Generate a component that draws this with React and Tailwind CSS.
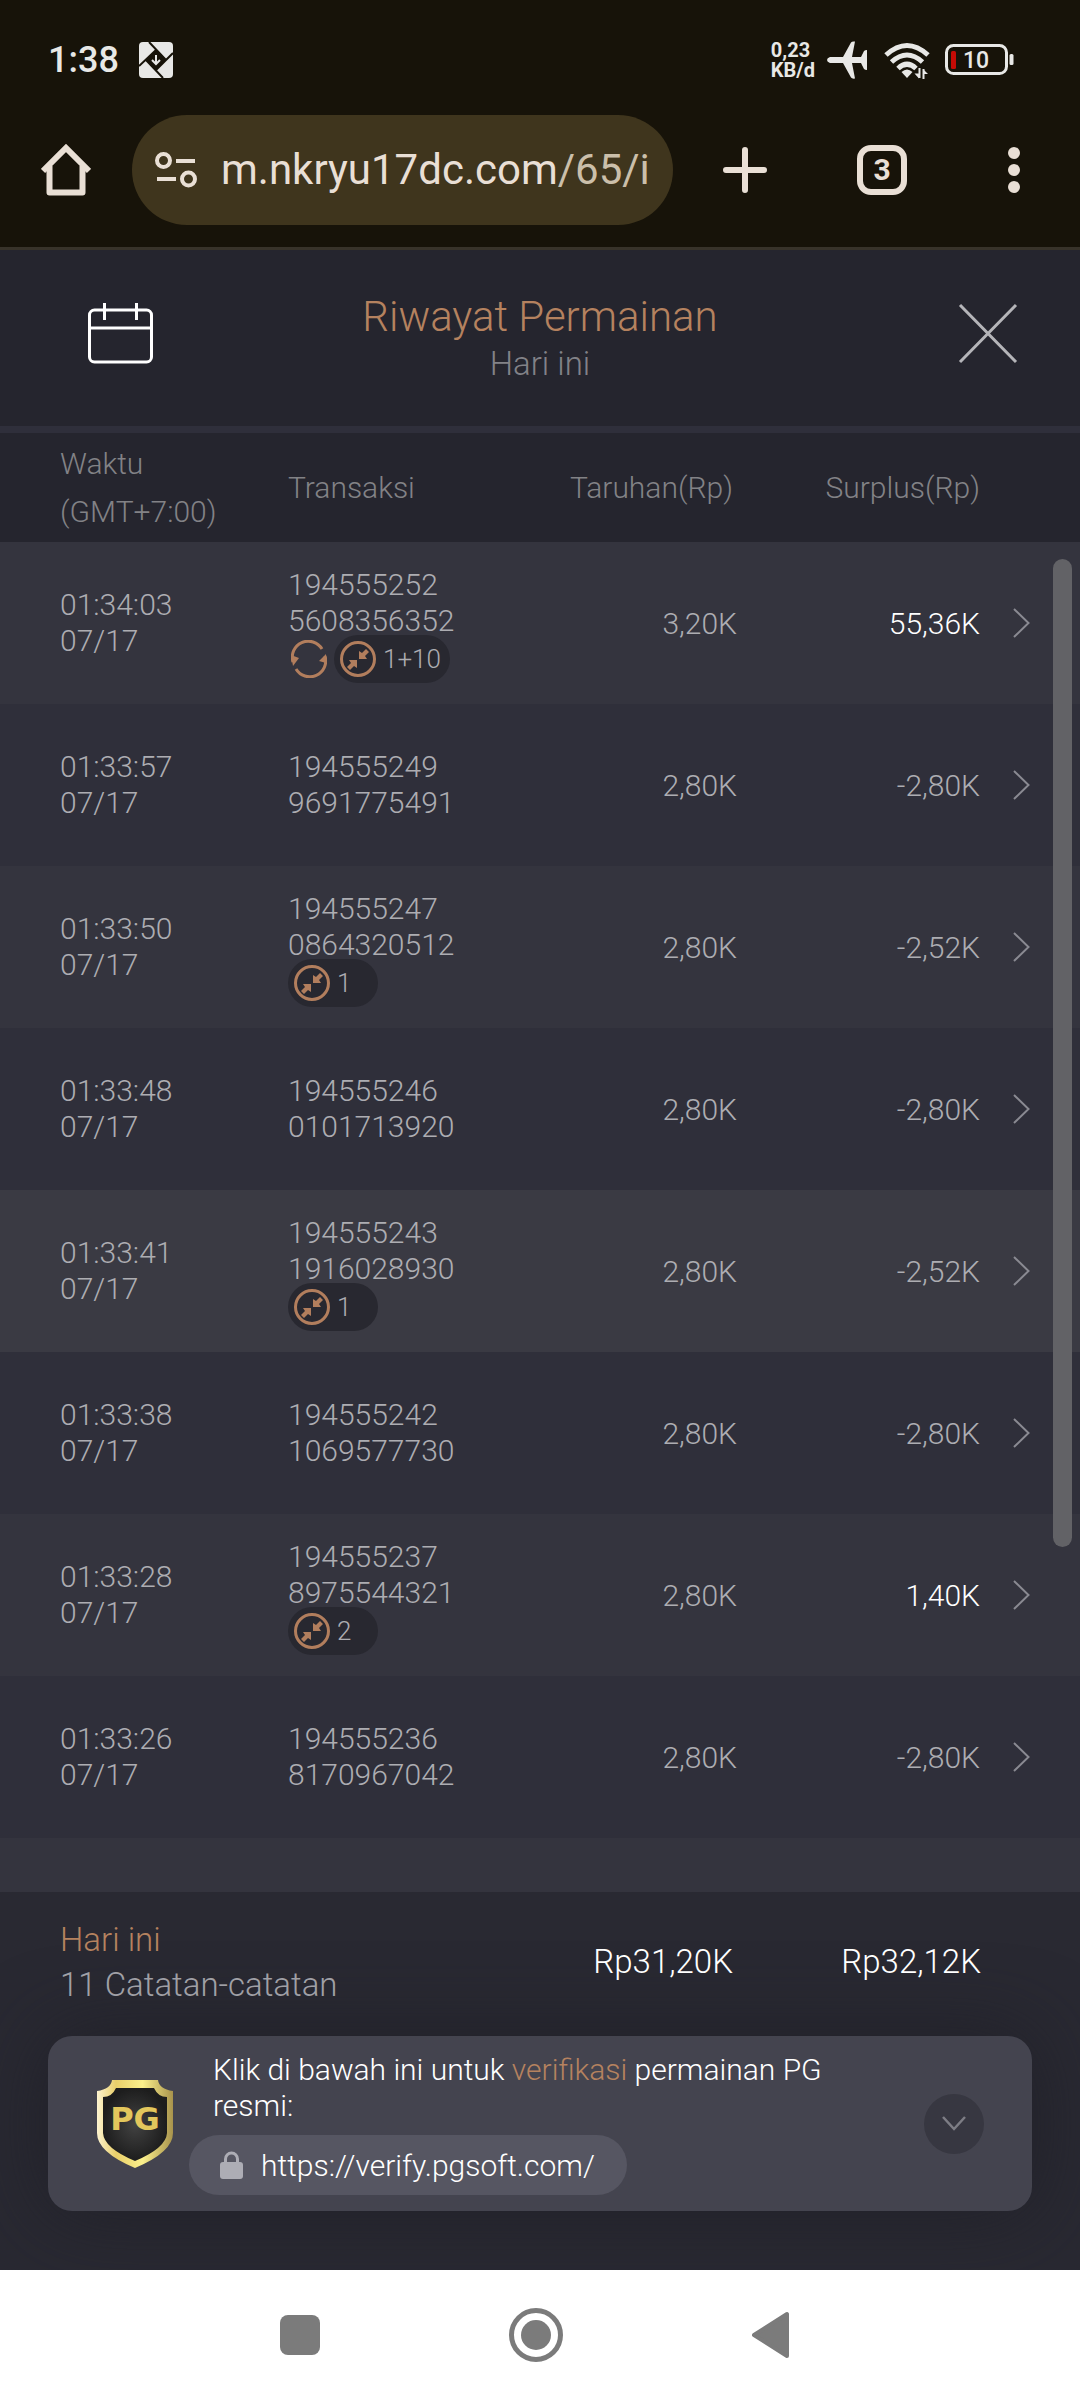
import { useState } from 'react';

const ROWS = [
  { time: '01:34:03', id: ['194555252', '5608356352'], bet: '3,20K', profit: '55,36K', win: true, free: true, badge: '1+10' },
  { time: '01:33:57', id: ['194555249', '9691775491'], bet: '2,80K', profit: '-2,80K' },
  { time: '01:33:50', id: ['194555247', '0864320512'], bet: '2,80K', profit: '-2,52K', badge: '1' },
  { time: '01:33:48', id: ['194555246', '0101713920'], bet: '2,80K', profit: '-2,80K' },
  { time: '01:33:41', id: ['194555243', '1916028930'], bet: '2,80K', profit: '-2,52K', badge: '1' },
  { time: '01:33:38', id: ['194555242', '1069577730'], bet: '2,80K', profit: '-2,80K' },
  { time: '01:33:28', id: ['194555237', '8975544321'], bet: '2,80K', profit: '1,40K', win: true, badge: '2' },
  { time: '01:33:26', id: ['194555236', '8170967042'], bet: '2,80K', profit: '-2,80K' },
];

function StatusBar() {
  return (
    <div className="flex h-[108px] items-center pt-3 pr-[66px] pl-12 text-[#e8e8e6]">
      <span className="text-4xl font-medium">1:38</span>
      <svg className="ml-5" width="34" height="36" viewBox="0 0 34 36">
        <rect width="34" height="36" rx="4" fill="currentColor" />
        <path d="M17 8 27 18 17 28 7 18Z" fill="#171309" />
        <path d="M10 0 27 18M34 11 17 28M24 36 7 18M0 24 17 8" stroke="#171309" strokeWidth="2" />
        <path d="M17 13v8M13 18l4 4 4-4" stroke="currentColor" strokeWidth="2" fill="none" />
      </svg>
      <div className="ml-auto text-[20px] leading-5 font-bold">
        <div>0,23</div>
        <div>KB/d</div>
      </div>
      <svg className="ml-3" width="41" height="38" viewBox="0 0 41 38" fill="currentColor">
        <path d="M3 16h13L24 1.500Q25 0 28 .5L25 16h9l3-6q1-1 3-1v20q-2 0-3-1l-3-6h-9l3 15.500q-3 .5-4-1L16 22H3q-3-1-3-3t3-3Z" />
      </svg>
      <svg className="ml-4" width="46" height="37" viewBox="0 0 46 37" fill="none" stroke="currentColor" strokeWidth="5">
        <path d="M2 13q21-19 42 0" />
        <path d="M7.500 20q15.500-14 31 0" />
        <path d="M14 26.500q9-8.500 18 0" />
        <path d="M23 36l-5.500-6q5.500-5 11 0Z" fill="currentColor" stroke="none" />
        <path d="M35 36.500l-4.500-5h4.500M39 27l5 5h-5" fill="currentColor" stroke="none" />
        <path d="M35.500 26v10M39.500 27v10" strokeWidth="2" />
      </svg>
      <svg className="ml-[15px]" width="69" height="32" viewBox="0 0 69 32">
        <rect x="1.500" y="1.500" width="60" height="28" rx="7" fill="none" stroke="currentColor" strokeWidth="3" />
        <rect x="6" y="7" width="5" height="18" rx="1.500" fill="#c50b05" />
        <rect x="64.500" y="10" width="4" height="11" rx="1.500" fill="currentColor" />
        <text x="31" y="24" textAnchor="middle" fontSize="23" fontWeight="500" fill="currentColor">10</text>
      </svg>
    </div>
  );
}

function BrowserBar() {
  return (
    <div className="flex h-[142px] items-center border-b-[3px] border-[#38332a] pr-[60px] pb-4 pl-[41px] text-[#e9dfd5]">
      <button aria-label="Home" className="mr-[41px]">
        <svg width="50" height="52" viewBox="0 0 50 52" fill="none" stroke="currentColor" strokeWidth="6" strokeLinejoin="round">
          <path d="M8.500 22V48.500H41.500V22" />
          <path d="M2 27 25 4 48 27" strokeLinejoin="miter" />
        </svg>
      </button>
      <button className="flex h-[110px] min-w-0 flex-1 items-center overflow-hidden rounded-full bg-[#3f351d] pl-[23px] text-left">
        <svg className="shrink-0" width="42" height="36" viewBox="0 0 42 36" fill="none" stroke="currentColor" strokeWidth="4">
          <circle cx="8.500" cy="8.500" r="6.500" />
          <path d="M21 9h19M2 27h19" />
          <circle cx="33.500" cy="27" r="6.500" />
        </svg>
        <span className="ml-6 text-[42px] whitespace-nowrap">
          m.nkryu17dc.com<span className="text-[#cbbfaa]">/65/i</span>
        </span>
      </button>
      <button aria-label="New tab" className="ml-[50px]">
        <svg width="44" height="46" viewBox="0 0 44 46" stroke="currentColor" strokeWidth="6" strokeLinecap="round">
          <path d="M22 3v40M3 23h38" />
        </svg>
      </button>
      <button aria-label="Tabs" className="ml-[90px] flex size-[50px] items-center justify-center rounded-[14px] border-[6px] border-current text-[30px] font-bold">
        3
      </button>
      <button aria-label="Menu" className="ml-[101px]">
        <svg width="12" height="46" viewBox="0 0 12 46" fill="currentColor">
          <circle cx="6" cy="6" r="6" />
          <circle cx="6" cy="23" r="6" />
          <circle cx="6" cy="40" r="6" />
        </svg>
      </button>
    </div>
  );
}

function Header() {
  return (
    <header className="flex items-start border-b-[7px] border-[#2f2f3b] bg-[#25252e] pt-10 pr-[62px] pb-[42px] pl-[88px]">
      <button aria-label="Calendar" className="mt-3 text-white">
        <svg width="66" height="62" viewBox="0 0 66 62" fill="none" stroke="currentColor" strokeWidth="3">
          <rect x="1.500" y="8" width="62" height="52" rx="5" />
          <path d="M1.500 26h62M16.500 1v17M48.500 1v17" />
        </svg>
      </button>
      <div className="flex-1 text-center">
        <h1 className="text-[42px] leading-[54px] text-[#b5825f]">Riwayat Permainan</h1>
        <p className="text-[33px] leading-10 text-[#828288]">Hari ini</p>
      </div>
      <button aria-label="Close" className="mt-3 ml-8">
        <svg width="60" height="62" viewBox="0 0 60 62" stroke="#b5b5b9" strokeWidth="3">
          <path d="M2 3 58 60M58 3 2 60" />
        </svg>
      </button>
    </header>
  );
}

function FreeSpinIcon() {
  return (
    <svg width="36" height="38" viewBox="0 0 36 38" fill="none" stroke="#b27e5d" strokeWidth="3">
      <path d="M2 22A16 16 0 0 1 31 9" />
      <path d="M34 16A16 16 0 0 1 5 29" />
      <path d="M0 15l8 3-6 8ZM35 14v9l-7-2Z" fill="#b27e5d" stroke="none" />
    </svg>
  );
}

function CollapseIcon() {
  return (
    <svg width="36" height="38" viewBox="0 0 36 38" fill="#b27e5d">
      <circle cx="18" cy="19" r="16.500" fill="none" stroke="#b27e5d" strokeWidth="3" />
      <path d="M19 11l3 2 4-4 3 3-4 4 2 3h-8ZM17 20v8l-3-2-4 4-3-3 4-4-2-3Z" />
    </svg>
  );
}

function Row({ row, tone }) {
  return (
    <tr className={`h-[162px] text-[#adadb2] ${tone}`}>
      <td className="pl-[60px] leading-9">{row.time}<br />07/17</td>
      <td className={`leading-9 ${row.badge ? 'pt-1' : ''}`}>
        {row.id[0]}<br />{row.id[1]}
        {row.badge && (
          <div className="-mt-1 flex items-center gap-1">
            {row.free && <span className="w-[42px] pl-[3px]"><FreeSpinIcon /></span>}
            <span className="flex h-12 min-w-[90px] items-center gap-[7px] rounded-full bg-[#282830] pr-[9px] pl-[6px] text-[26px]">
              <CollapseIcon />
              {row.badge}
            </span>
          </div>
        )}
      </td>
      <td className="text-right">{row.bet}</td>
      <td className={`text-right ${row.win ? 'text-white' : ''}`}>{row.profit}</td>
      <td className="pl-[33px]">
        <button aria-label={`Detail ${row.time}`} className="block">
          <svg width="17" height="30" viewBox="0 0 17 30" fill="none" stroke="#8a8a92" strokeWidth="2">
            <path d="M1 1l14.500 14L1 29" />
          </svg>
        </button>
      </td>
    </tr>
  );
}

function History() {
  return (
    <main className="relative flex-1 bg-[#34343e]">
      <table className="w-full table-fixed text-[30px]">
        <colgroup>
          <col className="w-[288px]" />
          <col />
          <col className="w-[232px]" />
          <col className="w-[243px]" />
          <col className="w-[100px]" />
        </colgroup>
        <thead>
          <tr className="h-[109px] bg-[#25252e] leading-[48px] text-[#828286]">
            <th className="pl-[60px] text-left font-light">Waktu<br />(GMT+7:00)</th>
            <th className="text-left font-light">Transaksi</th>
            <th className="pr-1 text-right font-light">Taruhan(Rp)</th>
            <th className="text-right font-light">Surplus(Rp)</th>
            <td />
          </tr>
        </thead>
        <tbody>
          {ROWS.map((row, i) => (
            <Row
              key={row.time}
              row={row}
              tone={i === 4 ? 'bg-[#3a3a43]' : i % 2 ? 'bg-[#2f2f3a]' : 'bg-[#34343e]'}
            />
          ))}
        </tbody>
      </table>
      <div className="absolute top-[126px] right-2 h-[988px] w-[19px] rounded-full bg-[#626266]" />
    </main>
  );
}

function Shield() {
  return (
    <svg width="78" height="90" viewBox="0 0 78 90">
      <defs>
        <linearGradient id="gold" x1="0" y1="0" x2="1" y2="0">
          <stop offset="0" stopColor="#fdf3cf" />
          <stop offset=".25" stopColor="#e9cf6a" />
          <stop offset=".6" stopColor="#fbf08c" />
          <stop offset="1" stopColor="#a8934c" />
        </linearGradient>
        <radialGradient id="dark">
          <stop offset="0" stopColor="#424242" />
          <stop offset="1" stopColor="#1d1d1d" />
        </radialGradient>
      </defs>
      <path d="M16 1H62Q63 10 77 12V54Q77 73 39 89Q1 73 1 54V12Q15 10 16 1Z" fill="url(#gold)" />
      <path d="M20 9H58Q62 18 71 18V54Q70 69 39 82Q8 69 7 54V18Q16 18 20 9Z" fill="url(#dark)" />
      <text x="39" y="51" textAnchor="middle" fontFamily="DejaVu Sans" fontSize="32" fontWeight="700" fill="#e3c75c">PG</text>
    </svg>
  );
}

function VerifyCard() {
  const [open, setOpen] = useState(true);

  return (
    <section className="mx-12 mt-[29px] flex items-center rounded-3xl bg-[#44444f] px-12 py-4 text-[30px] shadow-[0_0_80px_rgba(30,30,38,0.8)]">
      <Shield />
      <div className="ml-[15px] flex-1">
        <p className="mb-[11px] max-w-[660px] pl-6 leading-9 text-white">
          Klik di bawah ini untuk <span className="text-[#b5825f]">verifikasi</span> permainan PG resmi:
        </p>
        {open && (
          <a href="https://verify.pgsoft.com/" className="flex h-[60px] w-fit items-center rounded-full bg-[#565662] pr-8 pl-[31px] text-white">
            <svg className="mr-[18px]" width="23" height="28" viewBox="0 0 23 28" fill="#adadb5">
              <rect y="11" width="23" height="17" rx="3" />
              <path d="M5.500 12V8a6 6 0 0 1 12 0v4" fill="none" stroke="#adadb5" strokeWidth="3" />
            </svg>
            https://verify.pgsoft.com/
          </a>
        )}
      </div>
      <button
        aria-label="Toggle"
        onClick={() => setOpen(!open)}
        className="flex size-[60px] items-center justify-center rounded-full bg-[#373741]"
      >
        <svg width="24" height="15" viewBox="0 0 24 15" fill="none" stroke="#7d7d85" strokeWidth="2.500">
          <path d="M1 1l11 12L23 1" />
        </svg>
      </button>
    </section>
  );
}

function Footer() {
  return (
    <footer className="bg-[#292932] pt-[25px] pb-[59px]">
      <div className="flex items-center pr-[99px] pl-[60px] text-[33px]">
        <div className="flex-1 leading-[45px] text-[#a0a0a6]">
          <div className="text-[#b5825f]">Hari ini</div>
          <div>11 Catatan-catatan</div>
        </div>
        <span className="text-white">Rp31,20K</span>
        <span className="w-[248px] text-right text-white">Rp32,12K</span>
      </div>
      <VerifyCard />
    </footer>
  );
}

function NavBar() {
  return (
    <nav className="flex h-[130px] items-center bg-white pr-[290px] pl-[280px] text-[#7b7b7b]">
      <button aria-label="Recents" className="size-10 rounded-lg bg-current" />
      <button aria-label="Home" className="mx-auto">
        <svg width="54" height="54" viewBox="0 0 54 54">
          <circle cx="27" cy="27" r="24.500" fill="none" stroke="currentColor" strokeWidth="5" />
          <circle cx="27" cy="27" r="15" fill="currentColor" />
        </svg>
      </button>
      <button aria-label="Back">
        <svg width="38" height="48" viewBox="0 0 38 48" fill="currentColor" stroke="currentColor" strokeWidth="4" strokeLinejoin="round">
          <path d="M2 24 35 3V45Z" />
        </svg>
      </button>
    </nav>
  );
}

export default function App() {
  return (
    <div className="flex min-h-screen flex-col bg-[#171309] font-['Roboto',sans-serif]">
      <StatusBar />
      <BrowserBar />
      <div className="flex flex-1 flex-col font-light">
        <Header />
        <History />
        <Footer />
      </div>
      <NavBar />
    </div>
  );
}
